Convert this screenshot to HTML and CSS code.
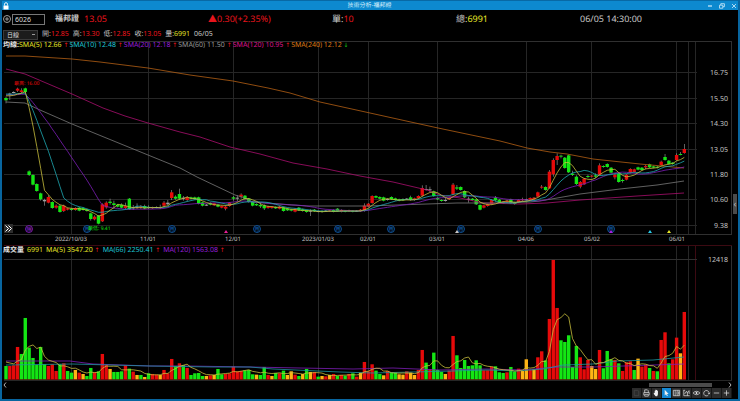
FILE: index.html
```
<!DOCTYPE html>
<html lang="zh-TW">
<head>
  <meta charset="UTF-8">
  <meta name="viewport" content="width=device-width, initial-scale=1.0">
  <title>技術分析-福邦證</title>
  <link rel="stylesheet" href="styles.css">
</head>
<body>
  <!-- Title bar -->
  <header class="titlebar">
    <svg class="lock" viewBox="0 0 8 8" width="8" height="8"><path d="M2.5 3.5V2.2a1.5 1.5 0 0 1 3 0v1.3" fill="none" stroke="#fff" stroke-width=".9"/><rect x="1.5" y="3.5" width="5" height="4" fill="#fff"/></svg>
    <h1>技術分析-福邦證</h1>
    <div class="window-buttons">
      <button aria-label="Minimize"><svg viewBox="0 0 6 6"><path d="M1 3h4" stroke-width="1.2"/></svg></button>
      <button aria-label="Restore"><svg viewBox="0 0 6 6"><path d="M.5 2.2h3.3v3H.5zM1.8 2V.7h3.6v3H4"/></svg></button>
      <button aria-label="Close"><svg viewBox="0 0 6 6"><path d="M1 1l4 4M5 1L1 5"/></svg></button>
    </div>
  </header>

  <!-- Quote -->
  <div class="quote">
    <div class="symbol">
      <button class="add" aria-label="Add"><svg viewBox="0 0 8 8"><circle cx="4" cy="4" r="2.8"/><path d="M4 2.5v3M2.5 4h3"/></svg></button>
      <input type="text" value="6026" aria-label="股票代號">
      <strong>福邦證</strong>
      <span class="up">13.05</span>
    </div>
    <div class="up">▲0.30(+2.35%)</div>
    <div>單:<span class="up">10</span></div>
    <div>總:<span class="yellow">6991</span></div>
    <div>06/05 14:30:00</div>
  </div>

  <!-- Day prices -->
  <div class="prices">
    <select aria-label="週期"><option>日線</option><option>週線</option><option>月線</option></select>
    <span>開:<b class="up">12.85</b></span>
    <span>高:<b class="up">13.30</b></span>
    <span>低:<b class="up">12.85</b></span>
    <span>收:<b class="up">13.05</b></span>
    <span>量:<b class="yellow">6991</b></span>
    <span>06/05</span>
  </div>

  <!-- Price chart -->
  <section class="pane">
    <div class="legend">
      <span class="white">均線:</span>
      <span class="yellow">SMA(5) 12.66 <i class="up">↑</i></span>
      <span class="cyan">SMA(10) 12.48 <i class="up">↑</i></span>
      <span class="purple">SMA(20) 12.18 <i class="up">↑</i></span>
      <span class="gray">SMA(60) 11.50 <i class="up">↑</i></span>
      <span class="pink">SMA(120) 10.95 <i class="up">↑</i></span>
      <span class="orange">SMA(240) 12.12 <i class="down">↓</i></span>
    </div>
    <svg class="chart" id="price-chart" viewBox="2 41 736 205"></svg>
    <button class="expand" aria-label="Expand"><svg viewBox="0 0 9 9"><path d="M1.5 1.5l3 3-3 3M4.5 1.5l3 3-3 3"/></svg></button>
    <button class="side-handle" aria-label="Collapse">‹</button>
  </section>

  <!-- Volume chart -->
  <section class="pane">
    <div class="legend volume-legend">
      <span class="white">成交量</span>
      <span class="yellow">6991</span>
      <span class="yellow">MA(5) 3547.20 <i class="up">↑</i></span>
      <span class="cyan">MA(66) 2250.41 <i class="up">↑</i></span>
      <span class="purple">MA(120) 1563.08 <i class="up">↑</i></span>
    </div>
    <svg class="chart" id="volume-chart" viewBox="2 246 736 136"></svg>
  </section>

  <!-- Scroll bar -->
  <div class="scroll">
    <button aria-label="Scroll left"><svg viewBox="0 0 6 6"><path d="M4 .5L2 3l2 2.5"/></svg></button>
    <div class="track"><div class="thumb"></div></div>
    <button aria-label="Scroll right"><svg viewBox="0 0 6 6"><path d="M2 .5L4 3 2 5.5"/></svg></button>
  </div>

  <!-- Toolbar -->
  <div class="toolbar">
    <button disabled aria-label="Save"><svg viewBox="0 0 10 10"><path d="M2.500 2h4l1 1v5h-5z"/></svg></button>
    <button aria-label="Print"><svg viewBox="0 0 10 10"><path d="M3 4.500V1.500h3l1 1v2M2 7.500v-3h6v3M3 6.500h4v2H3z"/></svg></button>
    <button aria-label="Pan"><svg viewBox="0 0 10 10"><path class="solid" d="M3 5V2.500h.8V4.500V1.500h1V4.500V1.700h.9V4.500V2.600h.9V6.500L5.800 8.500H4L2 6V4.800z"/></svg></button>
    <button class="active" aria-label="Select"><svg viewBox="0 0 10 10"><path class="solid" d="M3 1.500v6.200l1.500-1.300 1 2.200 1-.5-1-2.100h1.900z"/></svg></button>
    <button aria-label="Data window"><svg viewBox="0 0 10 10"><path d="M1.500 2h7v6h-7zM3.500 2v6M6.500 2v6M4.500 4h1M4.500 6h1M7.500 3.500v3"/></svg></button>
    <button aria-label="Indicators"><svg viewBox="0 0 10 10"><path d="M2 2v6h6.500M3 6l2-3 1 2 2-3M6 5v3M8 3v3M1.500 2h2"/></svg></button>
    <button aria-label="Show"><svg viewBox="0 0 10 10"><path d="M1.200 5Q5 1.200 8.800 5 5 8.800 1.200 5z"/><circle class="solid" cx="5" cy="5" r="1"/></svg></button>
    <button aria-label="Refresh"><svg viewBox="0 0 10 10"><path d="M7 7.400A3 3 0 1 1 7.900 5.500M6.500 5.200l1.400 1 1-1.400"/></svg></button>
    <button aria-label="Zoom out"><svg viewBox="0 0 10 10"><path d="M2 5h6"/></svg></button>
    <button aria-label="Zoom in"><svg viewBox="0 0 10 10"><path d="M2 5h6M5 2v6"/></svg></button>
  </div>

  <script src="chart.js"></script>
</body>
</html>
```
FILE: styles.css
```
* {
  box-sizing: border-box;
}

body {
  margin: 0;
  min-height: 100vh;
  background: #000;
  color: #c8c8c8;
  font-family: "Noto Sans", "Noto Sans CJK TC", sans-serif;
  font-size: 8px;
  line-height: 10px;
  text-rendering: geometricPrecision;
  border: 2px solid #08659f;
  border-top: 0;
}

button {
  display: flex;
  align-items: center;
  justify-content: center;
  padding: 0;
  border: 0;
  background: none;
  color: inherit;
  font: inherit;
  cursor: pointer;
}

button svg {
  fill: none;
  stroke: #e0e0e0;
  stroke-width: 0.8;
}

.up { color: #e8141c; }
.down { color: #14d214; }
.yellow { color: #e6e628; }
.cyan { color: #1ec3d2; }
.purple { color: #961ed7; }
.gray { color: #969696; }
.pink { color: #dc148c; }
.orange { color: #dc7814; }
.white { color: #e6e6e6; }

/* Title bar */
.titlebar {
  display: grid;
  grid-template-columns: 1fr auto 1fr;
  align-items: center;
  height: 10px;
  margin: 0 -2px;
  padding: 0 3px 0 2px;
  background: #0d89cf;
  border-top: 1px solid #0869a5;
}

.titlebar h1 {
  margin: 0;
  font-size: 6px;
  font-weight: normal;
  line-height: 9px;
  color: #d2ecfa;
}

.window-buttons {
  display: flex;
  justify-content: flex-end;
  gap: 6px;
}

.window-buttons svg {
  width: 6px;
  height: 6px;
  stroke: #d2ecfa;
}

/* Quote */
.quote {
  display: grid;
  grid-template-columns: 206fr 124fr 124fr 124fr 158fr;
  align-items: center;
  height: 18px;
  font-size: 9px;
}

.symbol {
  display: flex;
  align-items: center;
}

.symbol input {
  width: 33px;
  height: 11px;
  margin-right: 10px;
  padding: 0 2px;
  border: 1px solid #777;
  background: #000;
  color: #ddd;
  font: inherit;
  font-size: 7px;
}

.symbol strong {
  margin-right: 5px;
  font-size: 8px;
}

.add svg {
  width: 10px;
  height: 10px;
  stroke: #a0a0a0;
}

/* Day prices */
.prices {
  display: flex;
  align-items: center;
  gap: 4px;
  height: 13px;
  padding-left: 1px;
  font-size: 7px;
}

.prices select {
  appearance: none;
  width: 35px;
  height: 10px;
  padding: 0 3px;
  border: 1px solid #3a3a3a;
  background: #1c1c1c linear-gradient(#999, #999) no-repeat right 2px center / 3px 1px;
  color: #ddd;
  font: inherit;
  font-size: 6px;
  line-height: 8px;
}

.prices b {
  font-weight: normal;
}

/* Charts */
.pane {
  position: relative;
}

.chart {
  display: block;
  width: 100%;
}

.chart text {
  fill: #c0c0c0;
  font-size: 7px;
}

.chart .date {
  font-size: 6px;
  text-anchor: middle;
}

.chart .value {
  text-anchor: end;
}

.chart .mark {
  font-size: 5px;
}

.legend {
  position: absolute;
  top: 0;
  left: 1px;
  display: flex;
  gap: 1px;
  font-size: 7px;
  line-height: 10px;
  white-space: nowrap;
}

.legend i {
  font-family: "DejaVu Sans", sans-serif;
  font-size: 6px;
  font-style: normal;
}

.legend .white {
  font-weight: bold;
  margin-right: -1px;
}

.volume-legend {
  gap: 3px;
}

.volume-legend .white {
  margin-right: 0;
}

.expand {
  position: absolute;
  left: 2px;
  bottom: 13px;
  width: 9px;
  height: 9px;
  background: #2d2d2d;
}

.expand svg {
  width: 9px;
  height: 9px;
  stroke: #fff;
  stroke-width: 1;
}

.side-handle {
  position: absolute;
  right: 1px;
  bottom: 32px;
  width: 4px;
  height: 20px;
  background: #4b4b4b;
}

/* Scroll bar */
.scroll {
  display: flex;
  align-items: center;
  height: 6px;
  padding-right: 5px;
}

.scroll svg {
  width: 6px;
  height: 6px;
}

.track {
  flex: 1;
  padding-right: 15px;
}

.thumb {
  width: 9%;
  height: 4px;
  margin-left: auto;
  background: #4b4b4b;
}

/* Toolbar */
.toolbar {
  display: flex;
  justify-content: flex-end;
  height: 11px;
  padding-right: 6px;
}

.toolbar button {
  width: 10px;
  height: 10px;
  background: #2b2b2b;
  border-right: 1px solid #161616;
}

.toolbar .active {
  background: #1487d2;
}

.toolbar svg {
  width: 10px;
  height: 10px;
}

.toolbar .solid {
  fill: #f0f0f0;
  stroke: none;
}

.toolbar button:disabled svg {
  stroke: #484848;
}
```
FILE: chart.js
```
const FIRST_X = 6;
const STEP = 3.854;
const COLORS = { r: '#e60a0a', g: '#14e614', o: '#ffb414', w: '#a0a0a0' };

// one entry per day: direction, body top, body bottom, [high, low], three units per pixel below y = 50
const candles = `
g144,151,140,160 w131,134,128,150 w126,128 r116,122,113,126 r121,126,115,130 g115,126,113,131
g364,375,361,378 g375,404 g402,423 g430,448,428,452 w450,454,446,467 r441,458,436,460 g456,474
r467,473,463,476 g467,486 r467,483,464,486 r475,479 g476,480 r474,480 g473,482 g474,480 g478,483
g490,507,488,512 r500,508,496,511 g497,521 r463,514,460,516 r458,472,454,476 g455,459,446,464
g460,465,452,475 g464,470 g464,473,460,476 r468,474,458,478 g446,478 w472,475,465,480
w470,473,460,476 r469,473,465,477 g468,475,464,478 g471,474,466,477 r472,475 w471,473
r471,474,464,477 r458,467,453,470 w458,463,450,466 r427,444,420,450 g440,446,436,449
g432,446,416,450 w443,446,438,452 r442,450,438,454 g442,446 g442,448 g442,461 g457,467 w464,466
g459,464 r460,466 g464,470 r468,473 r470,476,466,481 r458,468 g442,446,438,452 w443,445,436,454
r434,440,430,446 g437,447 g446,456 g455,467 g462,466 g465,469,458,474 g466,475,463,480 r469,474
r470,474 g471,475 r470,476 g472,483 g476,481 g478,482 r477,485 g473,481 g478,483 g481,486
w482,484,478,498 g479,484 w483,485 g483,486 w482,484 r481,484 g480,485 g476,484 r480,485
g482,485 r481,484 g482,485 w482,484 r479,484 r467,482,460,485 r461,470 r438,459 g438,443
g441,446 g442,452 w447,450 g441,448 g445,450 g448,452 g447,451 w446,448 g442,449,437,452
r445,450 r438,444 r414,437,406,440 w417,419,405,422 w418,421,410,426 g424,438 g444,448
g450,453 w450,452,444,455 r444,448 r404,433,399,436 g412,416,405,420 g411,420 g423,442
w446,448,440,458 g446,450 g448,463 g465,479 r466,473 r463,468 r450,463 g443,451,438,455
g449,457 r455,460 r452,457 g448,459 g457,462 r450,456 r448,451,443,455 w448,450 r444,449
r443,448 r427,440 r410,413,405,416 g411,420 r365,415,360,416 r330,373,325,380 r318,330,310,345
g317,320,314,325 g323,354 g316,367 g371,375,362,378 g380,402,376,405 r396,410,393,415 r386,403
g378,381,374,384 r377,380 g376,380,370,384 r346,374,340,376 g348,351 g342,351 g353,368
r374,382,370,388 g371,396 g390,392,386,398 r374,389 r357,368 r358,366 g352,359 g353,360
r348,352,345,358 g343,352 g349,353 g350,353 r335,345,332,347 g321,330,312,332 g332,342
g338,342 r315,330,310,332 g312,315,306,316 r297,309,282,311`;

// direction and bar height, same scale
const volumes = `
g40 r40 r42 r97 g76 g184 g95 g64 g43 g97 g45 r40 r45 r25 g45 r48 g25 g20 o28 r20 o16 g10 g34 r21
g24 r76 r43 o31 g22 g22 g24 r42 g32 r23 o13 g13 o7 g18 r16 r14 o13 r28 r18 r61 g40 r48 g43 r34
g13 g18 g19 g10 o10 r12 o13 g31 g15 r16 r18 r38 r24 r25 g27 g28 g15 o14 g13 g37 r13 o10 g19 r18
g26 o13 o24 r14 g10 o16 g31 o22 r22 g8 o10 r9 o13 r16 g10 r13 g11 r16 g18 r8 o20 r52 r24 r45
g26 g16 o12 r25 g20 g20 o15 o14 r24 o20 o13 r28 r88 g50 r30 g80 g28 g22 o16 r26 r130 g72 g34
g58 g40 g42 g57 g42 r27 r27 r38 g39 g21 g19 r21 g37 g23 r32 o25 o60 r28 o30 r66 r84 g57 r181
r358 r214 g117 g112 g132 g37 g100 r66 r30 r58 o40 o31 r88 g33 g85 g60 r58 g48 r25 r51 r54 g28
o62 r38 r44 g34 r25 g24 r118 r141 g48 r60 r125 o78 r202`;

const verticals = [71.5, 148.5, 233.5, 318.5, 368.5, 437.5, 526.5, 591.5, 676.5, 688.5, 695.5];
const prices = [['16.75', 72.5], ['15.50', 98.5], ['14.30', 123.5], ['13.05', 149.5], ['11.80', 174.5], ['10.60', 199.5], ['9.38', 225.5]];
const dates = [['2022/10/03', 71], ['11/01', 148], ['12/01', 233], ['2023/01/03', 318], ['02/01', 368], ['03/01', 437], ['04/06', 526], ['05/02', 592], ['06/01', 677]];

function parse(text) {
  return text.trim().split(/\s+/).map(item => ({ color: item[0], v: item.slice(1).split(',').map(Number) }));
}

function x(i) {
  return FIRST_X + i * STEP;
}

function line(x1, y1, x2, y2, color) {
  return `<line x1="${x1}" y1="${y1}" x2="${x2}" y2="${y2}" stroke="${color}"/>`;
}

function rect(left, top, width, height, color) {
  return `<rect x="${left.toFixed(2)}" y="${top.toFixed(2)}" width="${width}" height="${height.toFixed(2)}" fill="${color}"/>`;
}

function curve(points, color) {
  return `<polyline points="${points}" fill="none" stroke="${color}" stroke-width="0.8"/>`;
}

function average(values, days, before, toY) {
  const all = Array(days).fill(before).concat(values);
  return values.map((v, i) => {
    const part = all.slice(i + 1, i + 1 + days);
    return x(i).toFixed(1) + ',' + toY(part.reduce((a, b) => a + b, 0) / days).toFixed(1);
  }).join(' ');
}

function drawPrice() {
  const days = parse(candles);
  const toY = v => 50 + v / 3;
  let out = '';

  // grid
  verticals.forEach(p => out += line(p, 41, p, 234, '#262626'));
  prices.forEach(p => out += line(4, p[1], 697, p[1], '#262626'));
  out += line(4, 41.5, 732, 41.5, '#303030') + line(4, 234.5, 732, 234.5, '#303030');
  out += line(731.5, 41, 731.5, 235, '#303030') + line(4, 245.5, 732, 245.5, '#3c0a12');
  prices.forEach(p => out += `<text class="value" x="728" y="${p[1] + 2}">${p[0]}</text>`);
  dates.forEach(d => out += `<text class="date" x="${d[1]}" y="241">${d[0]}</text>`);

  // candles
  days.forEach((d, i) => {
    const [top, bottom, high = top - 2, low = bottom + 2] = d.v;
    const color = COLORS[d.color];
    out += rect(x(i) - 0.3, toY(high), 0.6, (low - high) / 3, '#a0a0a0');
    out += rect(x(i) - 1.7, toY(top), 3.4, Math.max(1, (bottom - top) / 3), color);
  });

  // moving averages
  const closes = days.map(d => d.color === 'r' ? d.v[0] : d.v[1]);
  out += curve('6,56 25,56 72,59 100,62 148,68 190,75 233,81 268,88 290,93 320,102 370,113 438,128 500,141 527,148 550,152 567,154 593,159 640,164 684,168', '#b45f14');
  out += curve('6,69 25,74 72,94 103,108 125,116 148,123 180,132 200,137 230,147 260,154 293,163 327,169 360,176 393,182 427,190 440,195 460,198 483,203 520,204 547,203 580,200 637,196 684,193', '#aa0f6e');
  out += curve('6,102 25,103 40,110 72,124 148,155 180,168 197,177 235,195 242,197 253,202 307,206 368,206 397,205 457,203 493,203 530,202 540,201 580,194 620,189 657,185 684,181', '#787878');
  out += curve(average(closes, 20, 134, toY), '#7d1eb9');
  out += curve(average(closes, 10, 130, toY), '#1eaab4');
  out += curve(average(closes, 5, 134, toY), '#c8be3c');

  // markers
  [29, 87, 172, 257, 338, 391, 461, 538, 611].forEach((cx, i) => {
    const color = i ? '#0f5fb4' : '#9619c8';
    out += `<circle cx="${cx}" cy="229" r="3.5" fill="#04101c" stroke="${color}" stroke-width="0.8"/>`;
    out += `<text class="mark" x="${cx}" y="231" text-anchor="middle" style="fill:${color}">${i ? '月' : '除'}</text>`;
  });
  [[226, '#e61e96'], [457, '#c8c8c8'], [611, '#aa1ee6'], [650, '#28c8e6'], [669, '#e6e628']].forEach(t => {
    out += `<path d="M${t[0] - 2} 233l2-3 2 3z" fill="${t[1]}"/>`;
  });
  out += `<text class="mark" x="14" y="85" style="fill:${COLORS.r}">最高: 16.00</text>`;
  out += `<text class="mark" x="88" y="230" style="fill:${COLORS.g}">最低: 9.41</text>`;

  document.getElementById('price-chart').innerHTML = out;
}

function drawVolume() {
  const days = parse(volumes);
  const toY = v => 379.3 - v / 3;
  let out = '';

  verticals.forEach(p => out += line(p, 246, p, 380, '#262626'));
  out += line(695.5, 246, 695.5, 380, '#3c0a12');
  out += line(4, 259.5, 697, 259.5, '#303030') + line(731.5, 246, 731.5, 380, '#303030');
  out += line(4, 380.5, 732, 380.5, '#262626') + line(4, 379.5, 686, 379.5, '#5a0a0a');
  out += '<text class="value" x="728" y="262">12418</text>';

  days.forEach((d, i) => out += rect(x(i) - 1.7, toY(d.v[0]), 3.4, d.v[0] / 3, COLORS[d.color]));

  out += curve('6,361 70,361 93,364 150,366 187,366 250,367 300,368 353,369 393,368 440,370 487,369 523,370 557,367 593,367 684,364', '#7d1eb9');
  out += curve('6,365 72,364 150,366 213,367 250,367 273,369 340,372 373,373 453,371 487,370 517,371 543,369 563,365 593,364 617,361 653,360 684,357', '#1e96a0');
  out += curve(average(days.map(d => d.v[0]), 5, 55, toY), '#c8be3c');

  document.getElementById('volume-chart').innerHTML = out;
}

drawPrice();
drawVolume();
```
